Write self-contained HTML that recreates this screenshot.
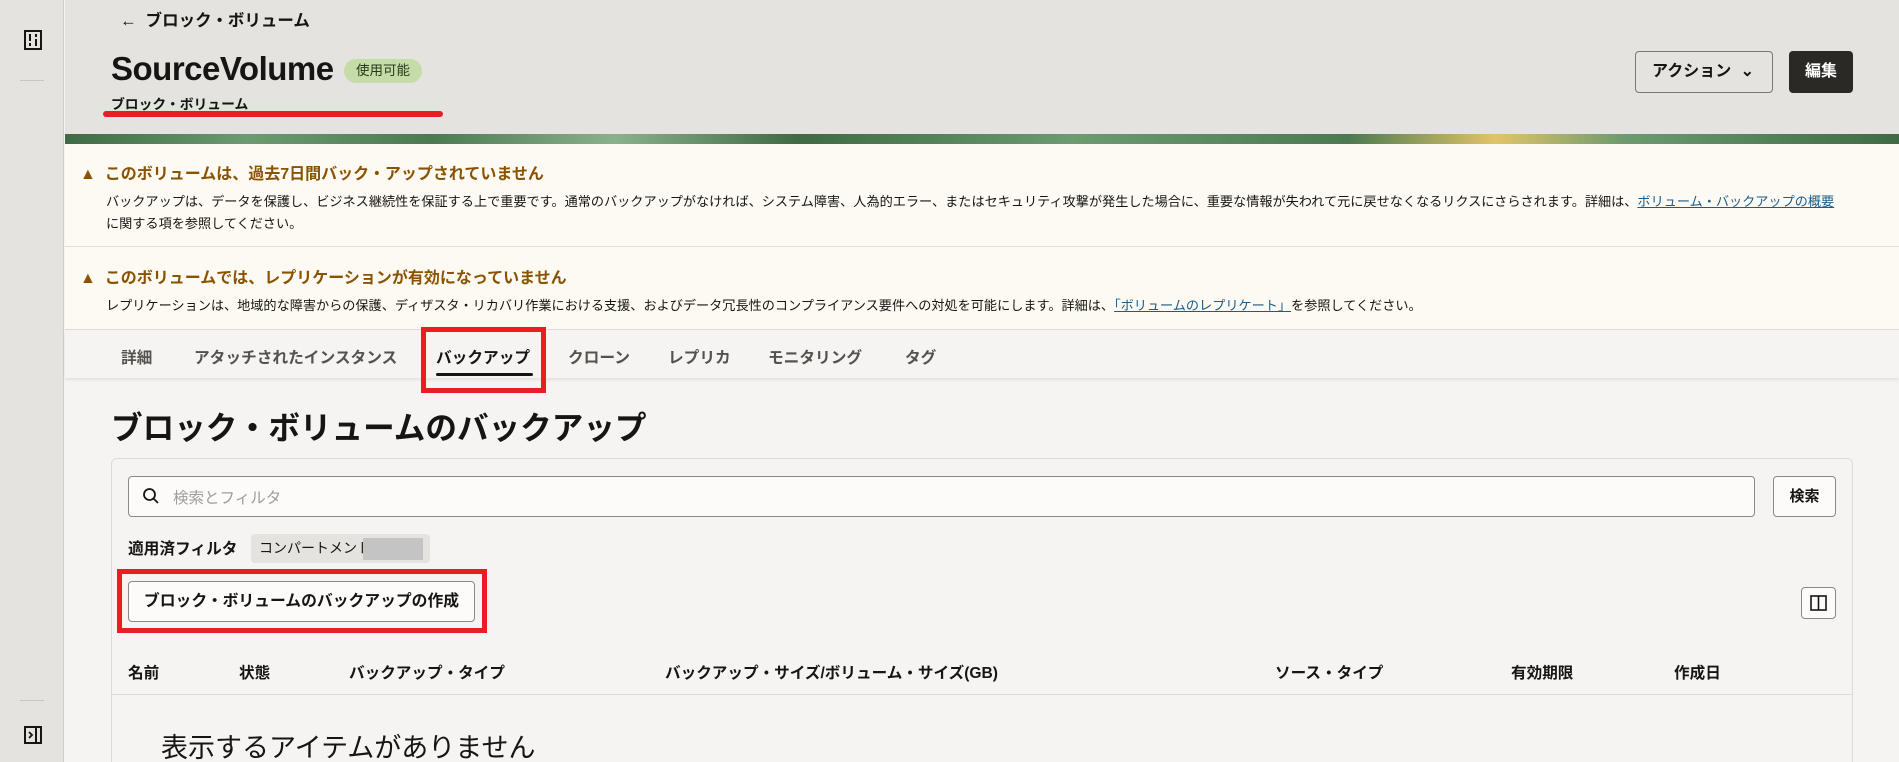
<!DOCTYPE html>
<html><head><meta charset="utf-8"><style>
*{margin:0;padding:0;box-sizing:border-box}
html,body{width:1899px;height:762px;overflow:hidden}
body{background:#f5f4f2;font-family:"Liberation Sans","Noto Sans CJK JP",sans-serif;color:#161513;position:relative}
.a{position:absolute;white-space:nowrap}
.b{font-weight:bold}
</style></head><body>
<div class="a" style="left:0;top:0;width:64px;height:762px;background:#e4e3df;border-right:1px solid #cfcdc9"></div>
<svg class="a" style="left:24px;top:30px" width="18" height="20" viewBox="0 0 18 20"><rect x="1" y="1" width="16" height="18" fill="none" stroke="#161513" stroke-width="2"/><rect x="5" y="4" width="2" height="7" fill="#161513"/><rect x="5" y="13" width="2" height="3" fill="#161513"/><rect x="11" y="4" width="2" height="3" fill="#161513"/><rect x="11" y="9" width="2" height="7" fill="#161513"/></svg>
<div class="a" style="left:20px;top:80px;width:24px;height:1px;background:#c8c6c2"></div>
<div class="a" style="left:20px;top:700px;width:24px;height:1px;background:#c8c6c2"></div>
<svg class="a" style="left:24px;top:726px" width="18" height="18" viewBox="0 0 18 18"><rect x="1" y="1" width="16" height="16" fill="none" stroke="#161513" stroke-width="2"/><line x1="12" y1="1" x2="12" y2="17" stroke="#161513" stroke-width="2"/><path d="M5 6l3 3-3 3" fill="none" stroke="#161513" stroke-width="1.8"/></svg>

<div class="a" style="left:65px;top:0;width:1834px;height:135px;background:#e4e3df"></div>
<div class="a b" style="left:120px;top:7px;font-size:16.5px">←&nbsp; ブロック・ボリューム</div>
<div class="a b" style="left:111px;top:50px;font-size:33px;letter-spacing:-0.5px">SourceVolume</div>
<div class="a" style="left:344px;top:59px;width:78px;height:24px;border-radius:12px;background:#c5dba8;font-size:13.5px;text-align:center;line-height:24px;color:#2b3a1c">使用可能</div>
<div class="a b" style="left:111px;top:93px;font-size:13.8px">ブロック・ボリューム</div>
<div class="a" style="left:103px;top:111px;width:340px;height:6px;border-radius:3px;background:#ec1c24"></div>
<div class="a b" style="left:1635px;top:51px;width:138px;height:42px;border:1px solid #7a7772;border-radius:4px;font-size:16px;line-height:40px;padding-left:16px">アクション <span style="position:absolute;right:18px;top:0">⌄</span></div>
<div class="a b" style="left:1789px;top:51px;width:64px;height:42px;border-radius:4px;background:#2b2926;color:#fff;font-size:16px;line-height:42px;text-align:center">編集</div>

<div class="a" style="left:65px;top:134px;width:1834px;height:10px;background:linear-gradient(90deg,#3f6a43,#6d9a6e 10%,#4c7a50 20%,#8bb08c 30%,#3f6a43 40%,#6d9a6e 55%,#4c7a50 70%,#e1c46a 78%,#6d9a6e 85%,#3f6a43)"></div>

<div class="a" style="left:65px;top:144px;width:1834px;height:185px;background:#fdf9f3"></div>
<div class="a" style="left:65px;top:246px;width:1834px;height:1px;background:#e2ded8"></div>
<div class="a b" style="left:80px;top:160px;font-size:16px;color:#8a5300">▲&nbsp; このボリュームは、過去7日間バック・アップされていません</div>
<div class="a" style="left:106px;top:191px;font-size:13.15px;line-height:22px;color:#161513">バックアップは、データを保護し、ビジネス継続性を保証する上で重要です。通常のバックアップがなければ、システム障害、人為的エラー、またはセキュリティ攻撃が発生した場合に、重要な情報が失われて元に戻せなくなるリクスにさらされます。詳細は、<span style="color:#1a5c8a;text-decoration:underline">ボリューム・バックアップの概要</span><br>に関する項を参照してください。</div>
<div class="a b" style="left:80px;top:264px;font-size:16px;color:#8a5300">▲&nbsp; このボリュームでは、レプリケーションが有効になっていません</div>
<div class="a" style="left:106px;top:295px;font-size:13.15px;color:#161513">レプリケーションは、地域的な障害からの保護、ディザスタ・リカバリ作業における支援、およびデータ冗長性のコンプライアンス要件への対処を可能にします。詳細は、<span style="color:#1a5c8a;text-decoration:underline">「ボリュームのレプリケート」</span>を参照してください。</div>

<div class="a" style="left:65px;top:329px;width:1834px;height:49px;background:#f5f4f2;border-top:1px solid #dedbd6;box-shadow:0 2px 3px rgba(0,0,0,.08)"></div>
<div class="a b" style="top:345px;left:121px;font-size:15.7px;color:#55524e">詳細</div>
<div class="a b" style="top:345px;left:194px;font-size:15.7px;color:#55524e">アタッチされたインスタンス</div>
<div class="a b" style="top:345px;left:436px;font-size:15.7px;color:#161513">バックアップ</div>
<div class="a b" style="top:345px;left:568px;font-size:15.7px;color:#55524e">クローン</div>
<div class="a b" style="top:345px;left:668px;font-size:15.7px;color:#55524e">レプリカ</div>
<div class="a b" style="top:345px;left:768px;font-size:15.7px;color:#55524e">モニタリング</div>
<div class="a b" style="top:345px;left:905px;font-size:15.7px;color:#55524e">タグ</div>
<div class="a" style="left:436px;top:373px;width:97px;height:3px;border-radius:2px;background:#161513"></div>
<div class="a" style="left:421px;top:327px;width:125px;height:66px;border:5px solid #ec1c24"></div>

<div class="a b" style="left:111px;top:403px;font-size:31.6px">ブロック・ボリュームのバックアップ</div>

<div class="a" style="left:111px;top:458px;width:1742px;height:320px;background:#f5f4f2;border:1px solid #dedbd6;border-radius:6px"></div>
<div class="a" style="left:128px;top:476px;width:1627px;height:41px;background:#fcfbfa;border:1px solid #8c8985;border-radius:4px"></div>
<svg class="a" style="left:142px;top:487px" width="18" height="18" viewBox="0 0 18 18"><circle cx="7.5" cy="7.5" r="5.5" fill="none" stroke="#161513" stroke-width="1.8"/><line x1="11.5" y1="11.5" x2="16" y2="16" stroke="#161513" stroke-width="1.8"/></svg>
<div class="a" style="left:173px;top:486px;font-size:15.5px;color:#a09d98">検索とフィルタ</div>
<div class="a b" style="left:1773px;top:476px;width:63px;height:41px;border:1px solid #8c8985;border-radius:4px;font-size:15px;line-height:39px;text-align:center;background:#fcfbfa">検索</div>
<div class="a b" style="left:128px;top:536px;font-size:15.7px">適用済フィルタ</div>
<div class="a" style="left:251px;top:534px;width:179px;height:29px;background:#e4e3df;border-radius:4px;font-size:14px;line-height:29px;padding-left:8px">コンパートメント</div>
<div class="a" style="left:363px;top:538px;width:60px;height:22px;background:#c4c4c4"></div>
<div class="a" style="left:117px;top:569px;width:370px;height:64px;border:5px solid #ec1c24"></div>
<div class="a b" style="left:128px;top:581px;width:347px;height:41px;border:1px solid #8c8985;border-radius:4px;background:#fcfbfa;font-size:15.8px;line-height:39px;text-align:center">ブロック・ボリュームのバックアップの作成</div>
<div class="a" style="left:1801px;top:587px;width:35px;height:32px;border:1px solid #8c8985;border-radius:4px;background:#fcfbfa"></div>
<svg class="a" style="left:1810px;top:595px" width="17" height="16" viewBox="0 0 17 16"><rect x="1" y="1" width="15" height="14" fill="none" stroke="#161513" stroke-width="1.6"/><line x1="8.5" y1="1" x2="8.5" y2="15" stroke="#161513" stroke-width="1.6"/></svg>
<div class="a b" style="left:128px;top:661px;font-size:15.6px">名前</div>
<div class="a b" style="left:239px;top:661px;font-size:15.6px">状態</div>
<div class="a b" style="left:349px;top:661px;font-size:15.6px">バックアップ・タイプ</div>
<div class="a b" style="left:665px;top:661px;font-size:15.6px">バックアップ・サイズ/ボリューム・サイズ(GB)</div>
<div class="a b" style="left:1275px;top:661px;font-size:15.6px">ソース・タイプ</div>
<div class="a b" style="left:1511px;top:661px;font-size:15.6px">有効期限</div>
<div class="a b" style="left:1674px;top:661px;font-size:15.6px">作成日</div>
<div class="a" style="left:112px;top:694px;width:1740px;height:1px;background:#dedbd6"></div>
<div class="a" style="left:161px;top:726px;font-size:27px;color:#161513">表示するアイテムがありません</div>
</body></html>
